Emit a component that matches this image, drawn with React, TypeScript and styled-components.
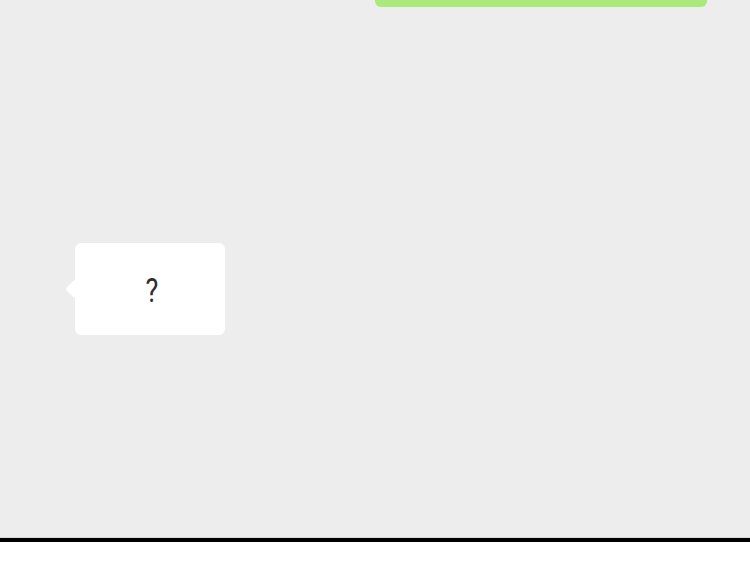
import React from "react";
import styled, { createGlobalStyle } from "styled-components";

const Global = createGlobalStyle`
  html, body { margin: 0; padding: 0; background: #ffffff; }
  body { font-family: Roboto, "Noto Sans", "Liberation Sans", sans-serif; }
  * { box-sizing: border-box; }
`;

const Screen = styled.div`
  width: 750px;
  height: 586px;
  display: flex;
  flex-direction: column;
  overflow: hidden;
`;

const ChatArea = styled.div`
  height: 537px;
  background: #ededed;
  overflow: hidden;
  display: flex;
  flex-direction: column;
`;

const MessageList = styled.div`
  margin-top: -43px;
  display: flex;
  flex-direction: column;
  gap: 236px;
`;

const Row = styled.div<{ $mine?: boolean }>`
  display: flex;
  justify-content: ${(p) => (p.$mine ? "flex-end" : "flex-start")};
  padding: ${(p) => (p.$mine ? "0 43px 0 0" : "0 0 0 75px")};
`;

const Bubble = styled.div<{ $mine?: boolean }>`
  position: relative;
  background: ${(p) => (p.$mine ? "#a9ea7a" : "#ffffff")};
  border-radius: 6px;
  width: ${(p) => (p.$mine ? "332px" : "150px")};
  height: ${(p) => (p.$mine ? "50px" : "92px")};
  display: flex;
  align-items: center;
  justify-content: center;
  padding-left: 4px;
  color: #2e2e2e;
  font-size: 33px;
  line-height: 1;

  &::before {
    content: "";
    position: absolute;
    top: 50%;
    ${(p) => (p.$mine ? "right: -5px;" : "left: -7px;")}
    width: 14px;
    height: 14px;
    background: inherit;
    border-radius: 3px;
    transform: translateY(-50%) rotate(45deg);
  }
`;

const Mark = styled.span`
  display: inline-block;
  transform: scaleX(0.82);
  margin-top: 2px;
`;

const Rule = styled.div`
  height: 5px;
  border-top: 1px solid #dadada;
  background: #000000;
`;

const InputBar = styled.div`
  flex: 1;
  background: #ffffff;
`;

export default function App() {
  return (
    <>
      <Global />
      <Screen>
        <ChatArea>
          <MessageList>
            <Row $mine>
              <Bubble $mine />
            </Row>
            <Row>
              <Bubble>
                <Mark>?</Mark>
              </Bubble>
            </Row>
          </MessageList>
        </ChatArea>
        <Rule />
        <InputBar />
      </Screen>
    </>
  );
}
